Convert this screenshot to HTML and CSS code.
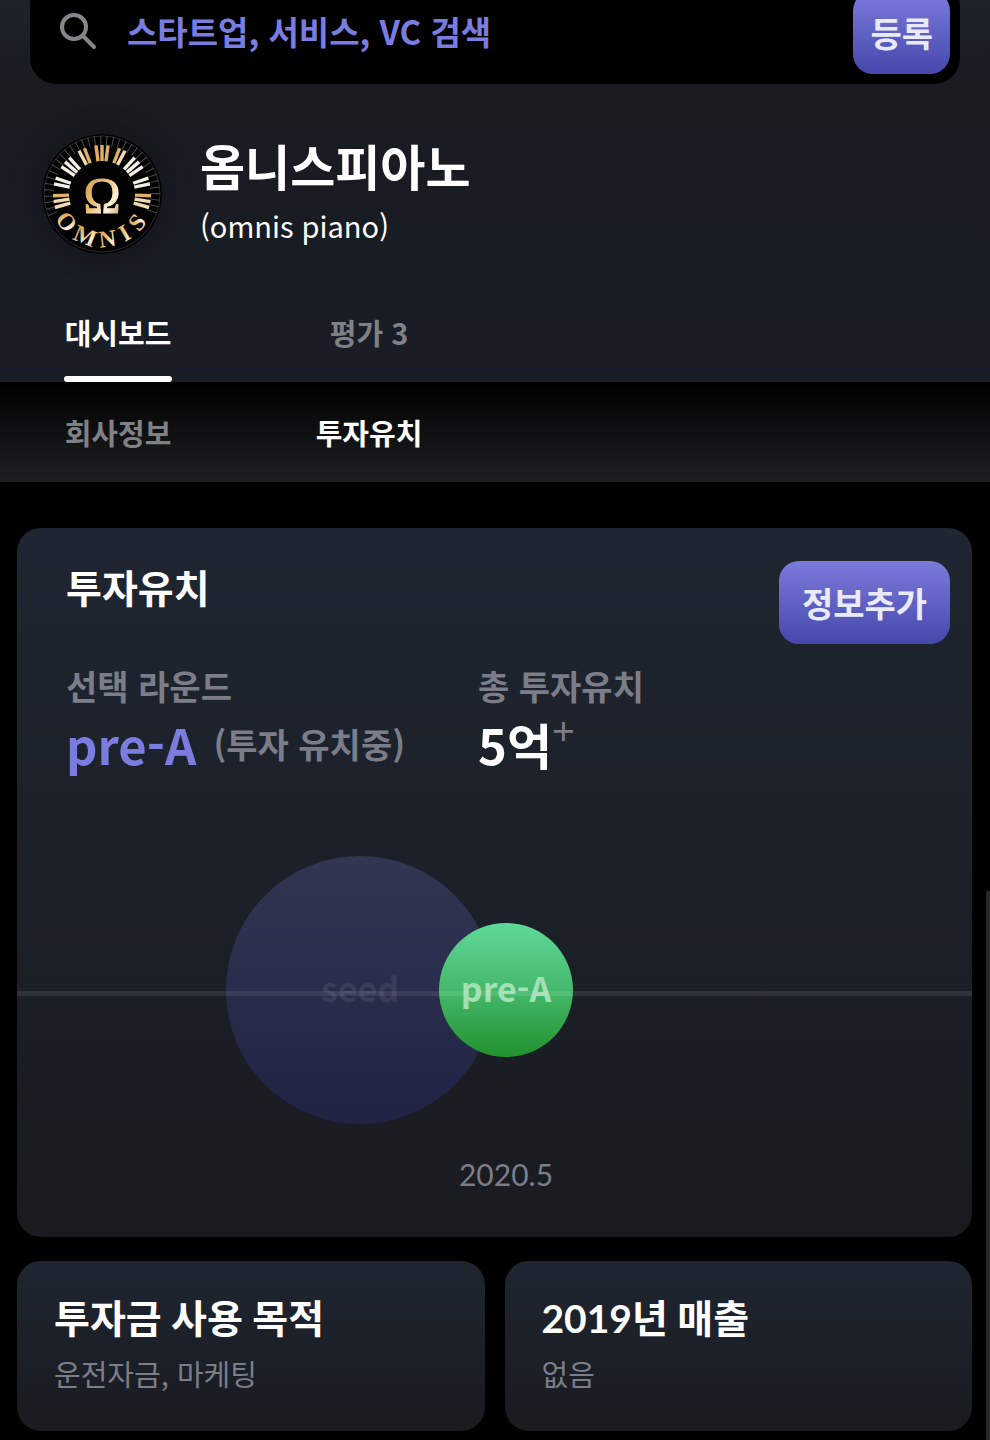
FILE: index.html
```html
<!DOCTYPE html>
<html lang="ko">
<head>
    <meta charset="UTF-8">
    <meta name="viewport" content="width=device-width, initial-scale=1">
    <title>옴니스피아노</title>
    <link rel="stylesheet" href="styles.css">
</head>
<body>
    <header class="header">
        <form class="search">
            <svg class="search-icon" viewBox="0 0 38 38" aria-hidden="true">
                <circle cx="15" cy="14" r="12"/>
                <path d="M24 23l11 11"/>
            </svg>
            <input class="search-input" type="text" aria-label="검색" placeholder="스타트업, 서비스, VC 검색">
            <button class="btn btn-register" type="button">등록</button>
        </form>

        <div class="company">
            <svg class="logo" viewBox="-60 -60 120 120" role="img" aria-label="OMNIS">
                <defs>
                    <linearGradient id="gold" x1="0" y1="0" x2="1" y2="1">
                        <stop offset="0" stop-color="#c98f3c"/>
                        <stop offset="0.45" stop-color="#e9c078"/>
                        <stop offset="0.7" stop-color="#fff3dc"/>
                        <stop offset="1" stop-color="#c08a40"/>
                    </linearGradient>
                </defs>
                <circle r="60" fill="#020203"/>
                <circle r="58" fill="none" stroke="#2b2c2e"/>
                <!-- thin lines between the keys -->
                <path d="M-49 20A53 53 0 1 1 49 20" fill="none" stroke="#4b4b4c" stroke-width="10" stroke-dasharray="1 5"/>
                <!-- piano keys, groups of three and two -->
                <g stroke-width="3.4">
                    <g stroke="#e0b066">
                        <path d="M0-33V-49"/>
                        <path d="M0-33V-49" transform="rotate(-7)"/>
                        <path d="M0-33V-49" transform="rotate(7)"/>
                        <path d="M0-33V-49" transform="rotate(-21)"/>
                        <path d="M0-33V-49" transform="rotate(21)"/>
                        <path d="M0-33V-49" transform="rotate(-92)"/>
                        <path d="M0-33V-49" transform="rotate(92)"/>
                    </g>
                    <g stroke="#f1d9b0">
                        <path d="M0-33V-49" transform="rotate(-28)"/>
                        <path d="M0-33V-49" transform="rotate(28)"/>
                        <path d="M0-33V-49" transform="rotate(-99)"/>
                        <path d="M0-33V-49" transform="rotate(99)"/>
                        <path d="M0-33V-49" transform="rotate(-106)"/>
                        <path d="M0-33V-49" transform="rotate(106)"/>
                    </g>
                    <g stroke="#f6efe4">
                        <path d="M0-33V-49" transform="rotate(-42)"/>
                        <path d="M0-33V-49" transform="rotate(42)"/>
                        <path d="M0-33V-49" transform="rotate(-49)"/>
                        <path d="M0-33V-49" transform="rotate(49)"/>
                        <path d="M0-33V-49" transform="rotate(-56)"/>
                        <path d="M0-33V-49" transform="rotate(56)"/>
                        <path d="M0-33V-49" transform="rotate(-71)"/>
                        <path d="M0-33V-49" transform="rotate(71)"/>
                        <path d="M0-33V-49" transform="rotate(-78)"/>
                        <path d="M0-33V-49" transform="rotate(78)"/>
                    </g>
                </g>
                <g class="logo-text" fill="url(#gold)">
                    <text class="logo-omega" y="18">Ω</text>
                    <text y="53" transform="rotate(52)">O</text>
                    <text y="53" transform="rotate(22)">M</text>
                    <text y="53" transform="rotate(-7)">N</text>
                    <text y="53" transform="rotate(-30)">I</text>
                    <text y="53" transform="rotate(-51)">S</text>
                </g>
            </svg>
            <div class="company-text">
                <h1 class="company-name">옴니스피아노</h1>
                <p class="company-sub">(omnis piano)</p>
            </div>
        </div>

        <nav class="tabs">
            <a class="tab active" href="#">대시보드</a>
            <a class="tab" href="#">평가 3</a>
        </nav>
    </header>

    <nav class="tabs subtabs">
        <a class="tab" href="#">회사정보</a>
        <a class="tab active" href="#">투자유치</a>
    </nav>

    <main class="content">
        <section class="card invest">
            <div class="invest-head">
                <h2 class="card-title">투자유치</h2>
                <button class="btn" type="button">정보추가</button>
            </div>

            <div class="stats">
                <div class="stat">
                    <p class="stat-label">선택 라운드</p>
                    <p class="stat-value"><span class="round">pre-A</span><span class="note">(투자 유치중)</span></p>
                </div>
                <div class="stat">
                    <p class="stat-label">총 투자유치</p>
                    <p class="stat-value">5억<span class="plus">+</span></p>
                </div>
            </div>

            <div class="chart">
                <div class="bubble seed">seed</div>
                <div class="bubble pre-a">pre-A</div>
            </div>
            <p class="chart-date">2020.5</p>
        </section>

        <div class="card-row">
            <section class="card info">
                <h2 class="card-title">투자금 사용 목적</h2>
                <p class="info-text">운전자금, 마케팅</p>
            </section>
            <section class="card info">
                <h2 class="card-title">2019년 매출</h2>
                <p class="info-text">없음</p>
            </section>
        </div>
    </main>

    <div class="scroll-thumb"></div>
</body>
</html>
```

FILE: styles.css
```css
* {
    box-sizing: border-box;
}
body {
    margin: 0;
    background-color: #000000;
    color: #ffffff;
    font-family: "Noto Sans CJK KR", sans-serif;
}
h1, h2, p {
    margin: 0;
}
a {
    color: inherit;
    text-decoration: none;
}

/* header */
.header {
    overflow: hidden;
    background: linear-gradient(#1e232b, #181b20 84px, #191d26);
}
.search {
    display: flex;
    align-items: center;
    margin: -20px 30px 0;
    padding: 10px 10px 10px 29px;
    border-radius: 26px;
    background-color: #000000;
}
.search-icon {
    flex: none;
    width: 38px;
    height: 38px;
    fill: none;
    stroke: #85858b;
    stroke-width: 4;
    stroke-linecap: round;
}
.search-input {
    flex: 1;
    min-width: 0;
    height: 84px;
    padding: 0 0 2px 30px;
    border: 0;
    outline: 0;
    background: none;
    color: #7b7ce0;
    font-family: inherit;
    font-size: 33px;
    font-weight: 700;
}
.search-input::placeholder {
    color: #7b7ce0;
    opacity: 1;
}
.btn {
    height: 83px;
    padding: 0 23px;
    border: 0;
    border-radius: 20px;
    background: linear-gradient(#7a7bda, #5b5cc0 60%, #4548aa);
    color: #e9eafa;
    font-family: inherit;
    font-size: 34px;
    font-weight: 700;
}
.btn-register {
    padding: 0 17px;
}
.company {
    display: flex;
    align-items: center;
    gap: 38px;
    margin: 50px 42px 0;
}
.logo {
    flex: none;
    width: 120px;
    height: 120px;
    border-radius: 50%;
    box-shadow: 0 0 30px rgba(0, 0, 0, 0.3);
}
.logo-text {
    font-family: "Liberation Serif", serif;
    font-size: 24px;
    font-weight: bold;
    text-anchor: middle;
}
.logo-omega {
    font-size: 50px;
    font-weight: normal;
    stroke: url(#gold);
    stroke-width: 1;
}
.company-text {
    padding-bottom: 6px;
}
.company-name {
    font-size: 49px;
    line-height: 60px;
    font-weight: 700;
}
.company-sub {
    margin-top: 8px;
    font-size: 29px;
    line-height: 44px;
}

/* tabs */
.tabs {
    display: flex;
    gap: 143px;
    padding: 56px 64px 0;
}
.tab {
    min-width: 108px;
    padding-bottom: 28px;
    color: #808186;
    font-size: 29px;
    line-height: 44px;
    font-weight: 700;
    text-align: center;
}
.tab.active {
    color: #ffffff;
}
.header .tab.active::after {
    content: "";
    display: block;
    height: 6px;
    margin: 22px 0 -28px;
    border-radius: 3px;
    background-color: #ffffff;
}
.subtabs {
    padding-top: 28px;
    background: linear-gradient(#000000, #1d2021);
}

/* cards */
.content {
    padding: 46px 18px 9px 17px;
}
.card {
    border-radius: 24px;
    background: linear-gradient(#1f2631, #1b1f27 55%, #191b1f);
}
.card-title {
    font-size: 39px;
    line-height: 50px;
    font-weight: 700;
}
.invest {
    padding: 33px 0 41px;
}
.invest-head {
    display: flex;
    justify-content: space-between;
    align-items: flex-start;
    padding: 0 22px 0 49px;
}
.stats {
    display: grid;
    grid-template-columns: 412px 1fr;
    margin-top: 20px;
    padding-left: 49px;
}
.stat-label {
    color: #7b7d88;
    font-size: 34px;
    line-height: 44px;
    font-weight: 700;
}
.stat-value {
    display: flex;
    align-items: center;
    font-size: 49px;
    line-height: 72px;
    font-weight: 700;
}
.round {
    color: #7b7ce0;
}
.note {
    margin-left: 17px;
    color: #7b7d88;
    font-size: 34px;
}
.plus {
    align-self: flex-start;
    color: #7b7d88;
    font-family: "Liberation Sans", sans-serif;
    font-size: 39px;
    line-height: 46px;
    font-weight: 400;
}

/* round chart */
.chart {
    position: relative;
    display: flex;
    align-items: center;
    margin-top: 76px;
    padding-left: 209px;
}
.chart::after {
    content: "";
    position: absolute;
    top: 135px;
    left: 0;
    right: 0;
    height: 5px;
    background-color: rgba(255, 255, 255, 0.09);
}
.bubble {
    display: flex;
    align-items: center;
    justify-content: center;
    padding-bottom: 6px;
    border-radius: 50%;
    font-size: 34px;
    font-weight: 700;
}
.seed {
    width: 268px;
    height: 268px;
    background: linear-gradient(#323652, #202344);
    color: #3a3d58;
}
.pre-a {
    width: 134px;
    height: 134px;
    margin-left: -55px;
    background: linear-gradient(#5fd898, #45b96c 50%, #22912f);
    color: #a3e0b5;
}
.chart-date {
    width: 134px;
    margin: 28px 0 0 422px;
    color: #7b7d88;
    font-family: Lato, "Noto Sans CJK KR", sans-serif;
    font-size: 30px;
    line-height: 44px;
    text-align: center;
}

/* bottom cards */
.card-row {
    display: grid;
    grid-template-columns: 1fr 1fr;
    gap: 20px;
    margin-top: 24px;
}
.info {
    padding: 32px 37px 36px;
}
.info .card-title {
    font-family: Lato, "Noto Sans CJK KR", sans-serif;
}
.info-text {
    margin-top: 8px;
    color: #7b7d88;
    font-size: 29px;
    line-height: 44px;
}

.scroll-thumb {
    position: fixed;
    right: 0;
    bottom: 0;
    width: 4px;
    height: 549px;
    background-color: #2a2928;
}
```
